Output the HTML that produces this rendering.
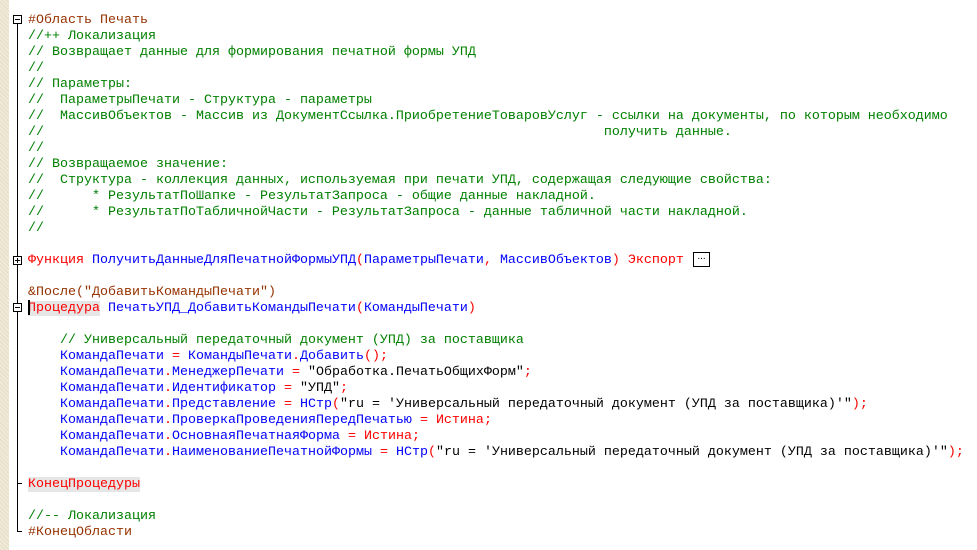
<!DOCTYPE html>
<html><head><meta charset="utf-8"><style>
html,body{margin:0;padding:0;background:#fff;width:977px;height:550px;overflow:hidden}
.g{position:absolute;left:0;top:0;width:9px;height:550px;background:#efe9d6;background-image:repeating-linear-gradient(45deg,#e6dfc8 0 1px,transparent 1px 3px)}
pre{position:absolute;left:28px;top:13px;margin:0;font:13.333px/16px "Liberation Mono","Courier New",monospace;color:#000;white-space:pre}
.c{color:#008000}.r{color:#963200}.k{color:#f00}.i{color:#00f}.o{color:#f00}
.h{background:#e6e6e6}
.vl{position:absolute;left:17px;width:1px;background:#000}
.bx{position:absolute;left:13px;width:7px;height:7px;border:1px solid #000;background:#fff}
.bx:before{content:"";position:absolute;left:1px;top:3px;width:5px;height:1px;background:#000}
.p:after{content:"";position:absolute;left:3px;top:1px;width:1px;height:5px;background:#000}
.tk{position:absolute;left:17px;width:5px;height:1px;background:#000}
.dots{position:absolute;left:693px;top:252px;width:17px;height:15px;border:1px solid #000;box-sizing:border-box;font:10px/8px "Liberation Sans",sans-serif;text-align:center}
.cur{position:absolute;left:28px;top:300px;width:2px;height:15px;background:#000}
</style></head><body>
<div class="g"></div>
<div class="vl" style="top:23px;height:509px"></div>
<div class="tk" style="top:531px"></div>
<div class="tk" style="top:483px"></div>
<div class="bx" style="top:15px"></div>
<div class="bx p" style="top:256px"></div>
<div class="bx" style="top:303px"></div>
<pre><span class="r">#Область Печать</span>
<span class="c">//++ Локализация</span>
<span class="c">// Возвращает данные для формирования печатной формы УПД</span>
<span class="c">//</span>
<span class="c">// Параметры:</span>
<span class="c">//  ПараметрыПечати - Структура - параметры</span>
<span class="c">//  МассивОбъектов - Массив из ДокументСсылка.ПриобретениеТоваровУслуг - ссылки на документы, по которым необходимо</span>
<span class="c">//                                                                      получить данные.</span>
<span class="c">//</span>
<span class="c">// Возвращаемое значение:</span>
<span class="c">//  Структура - коллекция данных, используемая при печати УПД, содержащая следующие свойства:</span>
<span class="c">//      * РезультатПоШапке - РезультатЗапроса - общие данные накладной.</span>
<span class="c">//      * РезультатПоТабличнойЧасти - РезультатЗапроса - данные табличной части накладной.</span>
<span class="c">//</span>

<span class="k">Функция</span> <span class="i">ПолучитьДанныеДляПечатнойФормыУПД</span><span class="o">(</span><span class="i">ПараметрыПечати</span><span class="o">,</span> <span class="i">МассивОбъектов</span><span class="o">)</span> <span class="k">Экспорт</span>

<span class="r">&amp;После(&quot;ДобавитьКомандыПечати&quot;)</span>
<span class="k h">Процедура</span> <span class="i">ПечатьУПД_ДобавитьКомандыПечати</span><span class="o">(</span><span class="i">КомандыПечати</span><span class="o">)</span>

    <span class="c">// Универсальный передаточный документ (УПД) за поставщика</span>
    <span class="i">КомандаПечати</span> <span class="o">=</span> <span class="i">КомандыПечати</span><span class="o">.</span><span class="i">Добавить</span><span class="o">();</span>
    <span class="i">КомандаПечати</span><span class="o">.</span><span class="i">МенеджерПечати</span> <span class="o">=</span> "Обработка.ПечатьОбщихФорм"<span class="o">;</span>
    <span class="i">КомандаПечати</span><span class="o">.</span><span class="i">Идентификатор</span> <span class="o">=</span> "УПД"<span class="o">;</span>
    <span class="i">КомандаПечати</span><span class="o">.</span><span class="i">Представление</span> <span class="o">=</span> <span class="i">НСтр</span><span class="o">(</span>"ru = 'Универсальный передаточный документ (УПД за поставщика)'"<span class="o">);</span>
    <span class="i">КомандаПечати</span><span class="o">.</span><span class="i">ПроверкаПроведенияПередПечатью</span> <span class="o">=</span> <span class="k">Истина</span><span class="o">;</span>
    <span class="i">КомандаПечати</span><span class="o">.</span><span class="i">ОсновнаяПечатнаяФорма</span> <span class="o">=</span> <span class="k">Истина</span><span class="o">;</span>
    <span class="i">КомандаПечати</span><span class="o">.</span><span class="i">НаименованиеПечатнойФормы</span> <span class="o">=</span> <span class="i">НСтр</span><span class="o">(</span>"ru = 'Универсальный передаточный документ (УПД за поставщика)'"<span class="o">);</span>

<span class="k h">КонецПроцедуры</span>

<span class="c">//-- Локализация</span>
<span class="r">#КонецОбласти</span></pre>
<div class="dots">...</div>
<div class="cur"></div>
</body></html>
